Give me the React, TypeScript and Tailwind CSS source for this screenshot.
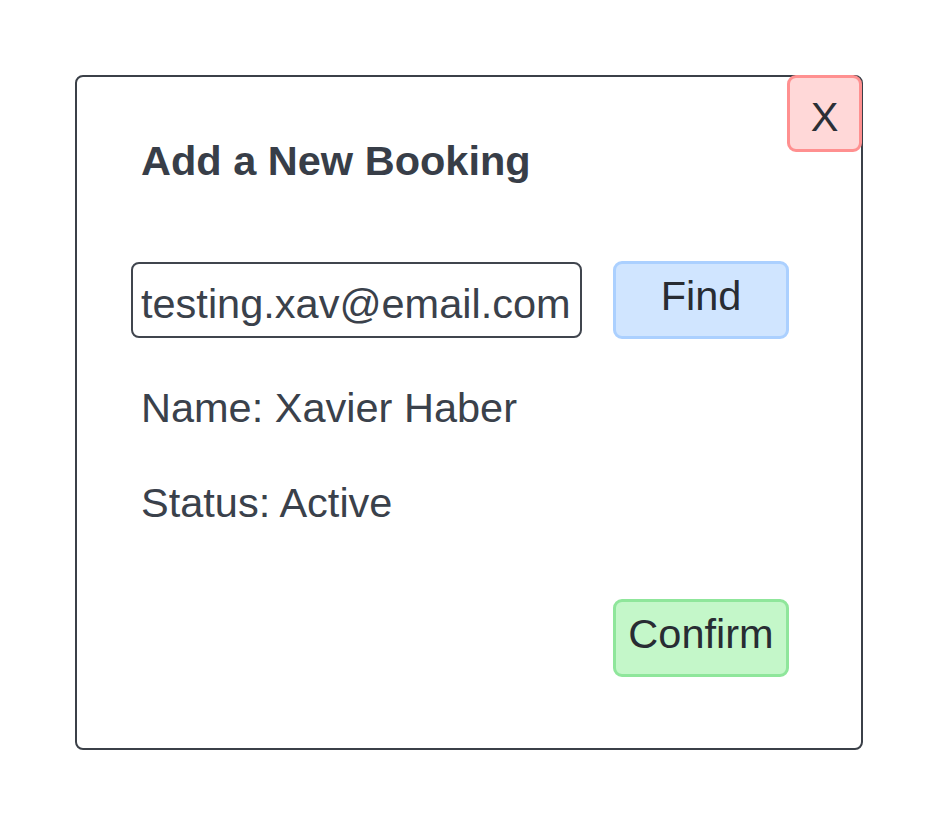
export default function App() {
  return (
    <div className="w-[938px] h-[825px] bg-white pl-[75px] pt-[75px]" style={{ fontFamily: '"Liberation Sans", Arial, sans-serif' }}>
      <div className="relative w-[788px] h-[675px] border-2 border-[#3b4048] rounded-[8px] pl-[54px] pt-[61px]">
        <div className="absolute right-[-1px] top-[-2px] w-[75px] h-[77px] bg-[#ffd8d8] border-[3px] border-[#ff9090] rounded-[9px] flex items-center justify-center pt-[6px] text-[41.5px] leading-[46px] text-[#2b2f36]">
          X
        </div>
        <div className="pl-[10px] text-[41.5px] leading-[46px] font-bold text-[#383e48]">Add a New Booking</div>
        <div className="mt-[77px] flex items-center gap-[31px]">
          <div className="w-[451px] h-[76px] border-2 border-[#40454e] rounded-[8px] pl-[8px] pt-[17px] text-[41.5px] leading-[46px] text-[#3a414b] whitespace-nowrap">
            testing.xav@email.com
          </div>
          <div className="w-[176px] h-[78px] bg-[#d0e5ff] border-[3px] border-[#abd0ff] rounded-[9px] flex items-center justify-center pb-[8px] text-[41.5px] leading-[46px] text-[#282c33]">
            Find
          </div>
        </div>
        <div className="mt-[46px] pl-[10px] text-[41.5px] leading-[46px] text-[#3a414b]">Name: Xavier Haber</div>
        <div className="mt-[49px] pl-[10px] text-[41.5px] leading-[46px] text-[#3a414b]">Status: Active</div>
        <div className="mt-[73px] flex">
          <div className="ml-[482px] w-[176px] h-[78px] bg-[#c4f7c9] border-[3px] border-[#8fe69b] rounded-[9px] flex items-center justify-center pb-[8px] text-[41.5px] leading-[46px] text-[#282c33]">
            Confirm
          </div>
        </div>
      </div>
    </div>
  );
}
